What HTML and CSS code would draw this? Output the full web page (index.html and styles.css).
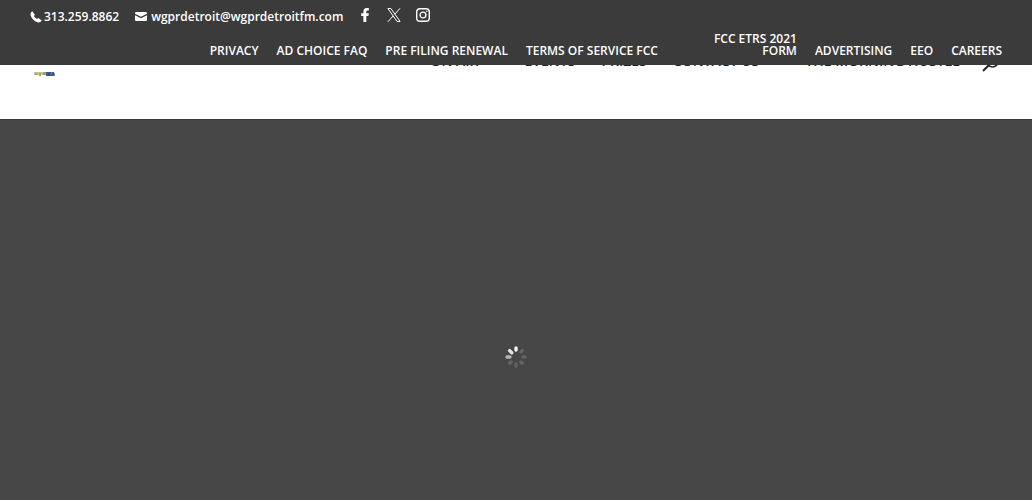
FILE: index.html
```html
<!DOCTYPE html>
<html lang="en">
  <head>
    <meta charset="UTF-8" />
    <meta name="viewport" content="width=device-width, initial-scale=1.0" />
    <title>WGPR Detroit</title>
    <link rel="stylesheet" href="styles.css">
  </head>
  <body>
    <div class="top-header">
      <div class="top-info">
        <a class="phone" href="tel:3132598862">
          <svg width="12" height="12" viewBox="0 0 12 12" fill="currentColor"><path d="M2.6.6 4.7 3.4Q5 3.8 4.6 4.2L3.9 4.9Q5 7 7.1 8L7.9 7.3Q8.3 6.9 8.7 7.2L11.4 9.2Q11.8 9.6 11.4 10Q9.8 12 7.5 11.2Q2.2 9.4.6 4.2Q0 2 1.8.5Q2.3.1 2.6.6Z" /></svg>
          313.259.8862
        </a>
        <a class="email" href="mailto:wgprdetroit@wgprdetroitfm.com">
          <svg width="12" height="12" viewBox="0 0 12 12" fill="currentColor"><path d="M0 2.2Q0 1 1.2 1H10.8Q12 1 12 2.2V2.7L6 5.8 0 2.7ZM0 4.2 6 7.3 12 4.2V8.8Q12 10 10.8 10H1.2Q0 10 0 8.8Z" /></svg>
          wgprdetroit@wgprdetroitfm.com
        </a>
        <div class="social">
          <a href="#" aria-label="Facebook">
            <svg width="14" height="14" viewBox="0 0 14 14" fill="currentColor"><path d="M5.4 14V8H3.2V5.3H5.4V3.6Q5.4 0 8.8 0H10.8V2.6H9.4Q8.3 2.6 8.3 3.7V5.3H10.8L10.4 8H8.3V14Z" /></svg>
          </a>
          <a href="#" aria-label="X">
            <svg width="14" height="14" viewBox="0 0 14 14" fill="none" stroke="currentColor"><path d="M.9.5H3.9L13.1 13.5H10.1ZM13 .3 7.7 6.3M6.2 7.9.9 13.8" /></svg>
          </a>
          <a href="#" aria-label="Instagram">
            <svg width="14" height="14" viewBox="0 0 14 14" fill="none" stroke="currentColor" stroke-width="1.4"><rect x=".7" y=".7" width="12.6" height="12.6" rx="3.4" /><circle cx="7" cy="7" r="2.9" /><circle cx="10.8" cy="3.2" r=".8" fill="currentColor" stroke="none" /></svg>
          </a>
        </div>
      </div>
      <nav class="top-nav">
        <a href="#">PRIVACY</a>
        <a href="#">AD CHOICE FAQ</a>
        <a href="#">PRE FILING RENEWAL</a>
        <a href="#">TERMS OF SERVICE FCC</a>
        <a class="wrapped" href="#">FCC ETRS 2021<br>FORM</a>
        <a href="#">ADVERTISING</a>
        <a href="#">EEO</a>
        <a href="#">CAREERS</a>
      </nav>
    </div>

    <header class="main-header">
      <a class="logo" href="#" aria-label="WGPR home">
        <svg width="22" height="6" viewBox="0 0 22 6">
          <rect y="1" width="9" height="3" fill="#c3c490" />
          <rect x="1" y="2" width="2" height="2" fill="#a9a85c" />
          <rect x="5" y="2" width="2" height="3" fill="#a3ad68" />
          <rect x="9" y="1" width="4" height="3" fill="#8fa878" />
          <rect x="12" y="1" width="8" height="4" fill="#42598f" />
          <rect x="14" y="2" width="1" height="2" fill="#2c4380" />
          <rect x="17" y="1" width="1" height="2" fill="#7486b0" />
          <rect x="20" y="2" width="1" height="3" fill="#7486b0" />
        </svg>
      </a>
      <nav class="main-nav">
        <a class="has-menu" href="#">ON AIR</a>
        <a href="#">EVENTS</a>
        <a href="#">PRIZES</a>
        <a class="has-menu" href="#">CONTACT US</a>
        <a href="#">THE MORNING HUSTLE</a>
        <button class="search" type="button" aria-label="Search">
          <svg width="17" height="17" viewBox="0 0 17 17" fill="none" stroke="currentColor" stroke-width="1.5"><circle cx="10.5" cy="6.5" r="5.5" /><path d="M6.5 10.5 1 16" stroke-width="2" /></svg>
        </button>
      </nav>
    </header>

    <main class="slider">
      <svg class="loader" width="22" height="22" viewBox="-11 -11 22 22" stroke="#fff" stroke-width="3.4" stroke-linecap="round">
        <path d="M0-9V-7" opacity=".95" />
        <path d="M0-9V-7" opacity=".15" transform="rotate(45)" />
        <path d="M0-9V-7" opacity=".15" transform="rotate(90)" />
        <path d="M0-9V-7" opacity=".15" transform="rotate(135)" />
        <path d="M0-9V-7" opacity=".15" transform="rotate(180)" />
        <path d="M0-9V-7" opacity=".15" transform="rotate(225)" />
        <path d="M0-9V-6" opacity=".6" transform="rotate(270)" />
        <path d="M0-9V-6" opacity=".85" transform="rotate(315)" />
      </svg>
    </main>
  </body>
</html>
```

FILE: styles.css
```css
* {
  padding: 0;
  margin: 0;
  box-sizing: border-box;
}

body {
  display: flex;
  flex-direction: column;
  min-height: 100vh;
  font-family: "Open Sans", Arial, sans-serif;
  font-weight: 600;
  background-color: #fff;
}

a {
  color: inherit;
  text-decoration: none;
}

svg {
  display: block;
}

/* top bar, covers the upper part of the main menu */
.top-header {
  position: relative;
  z-index: 2;
  padding: 8px 30px;
  font-size: 12px;
  line-height: 12px;
  color: #fff;
  background-color: #3b3b3b;
}

.top-info {
  display: flex;
  align-items: center;
  height: 18px;
}

.phone,
.email {
  display: flex;
  align-items: center;
  gap: 2px;
  margin-right: 16px;
}

.email {
  gap: 4px;
  margin-right: 15px;
}

.social {
  display: flex;
  gap: 15px;
  margin-top: -4px;
}

.top-nav {
  display: flex;
  justify-content: flex-end;
  align-items: flex-end;
  gap: 18px;
  margin-top: 7px;
}

.wrapped {
  width: 121px;
  text-align: right;
}

.main-header {
  display: flex;
  justify-content: space-between;
  align-items: flex-start;
  height: 54px;
  padding: 0 33px 0 34px;
}

.logo {
  margin-top: 6px;
}

.main-nav {
  display: flex;
  align-items: flex-start;
  gap: 26px;
  margin-top: -14px;
  font-size: 14px;
  line-height: 20px;
  color: #222;
}

.has-menu {
  padding-right: 20px;
}

.search {
  margin-top: 4px;
  margin-left: -4px;
  border: none;
  color: #222;
  background: none;
  cursor: pointer;
}

.slider {
  display: flex;
  flex: 1;
  justify-content: center;
  padding-top: 226px;
  border-top: 1px solid #3b3b3b;
  background-color: #474747;
}
```
